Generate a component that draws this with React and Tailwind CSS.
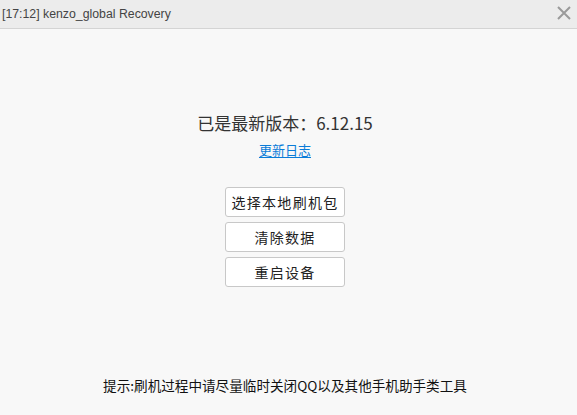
import React from "react";

const font = { fontFamily: '"Microsoft YaHei", "Noto Sans CJK SC", "Liberation Sans", sans-serif' };

export default function App() {
  const buttons = ["选择本地刷机包", "清除数据", "重启设备"];
  return (
    <div className="w-[577px] h-[415px] flex flex-col bg-[#f8f8f8] text-[#222]" style={font}>
      {/* title bar */}
      <div className="h-[29px] shrink-0 flex items-center justify-between bg-[#ececec] border-b border-[#d4d4d4] pl-[2px] pr-[6px]">
        <span className="text-[12.3px] text-[#444] font-['Liberation_Sans',sans-serif]">[17:12] kenzo_global Recovery</span>
        <svg width="14" height="14" viewBox="0 0 14 14" className="mb-[2px]">
          <path d="M1 1L13 13M13 1L1 13" stroke="#9a9a9a" strokeWidth="2" />
        </svg>
      </div>

      {/* body */}
      <div className="flex-1 flex flex-col items-center pr-[7px]">
        <div className="mt-[83px] text-[17px] leading-[22px] text-[#333]">已是最新版本：6.12.15</div>
        <a className="mt-[7px] text-[13px] leading-[18px] text-[#0a7cd8] underline underline-offset-2 cursor-pointer">更新日志</a>

        <div className="mt-[28px] flex flex-col gap-[5px]">
          {buttons.map((b) => (
            <button
              key={b}
              className="w-[120px] h-[30px] bg-white border border-[#c8c8c8] rounded-[3px] text-[14px] text-[#222] tracking-[1.3px]"
            >
              {b}
            </button>
          ))}
        </div>

        <div className="mt-auto mb-[21px] text-[13.6px] leading-[18px] text-[#111]">
          提示:刷机过程中请尽量临时关闭QQ以及其他手机助手类工具
        </div>
      </div>
    </div>
  );
}
